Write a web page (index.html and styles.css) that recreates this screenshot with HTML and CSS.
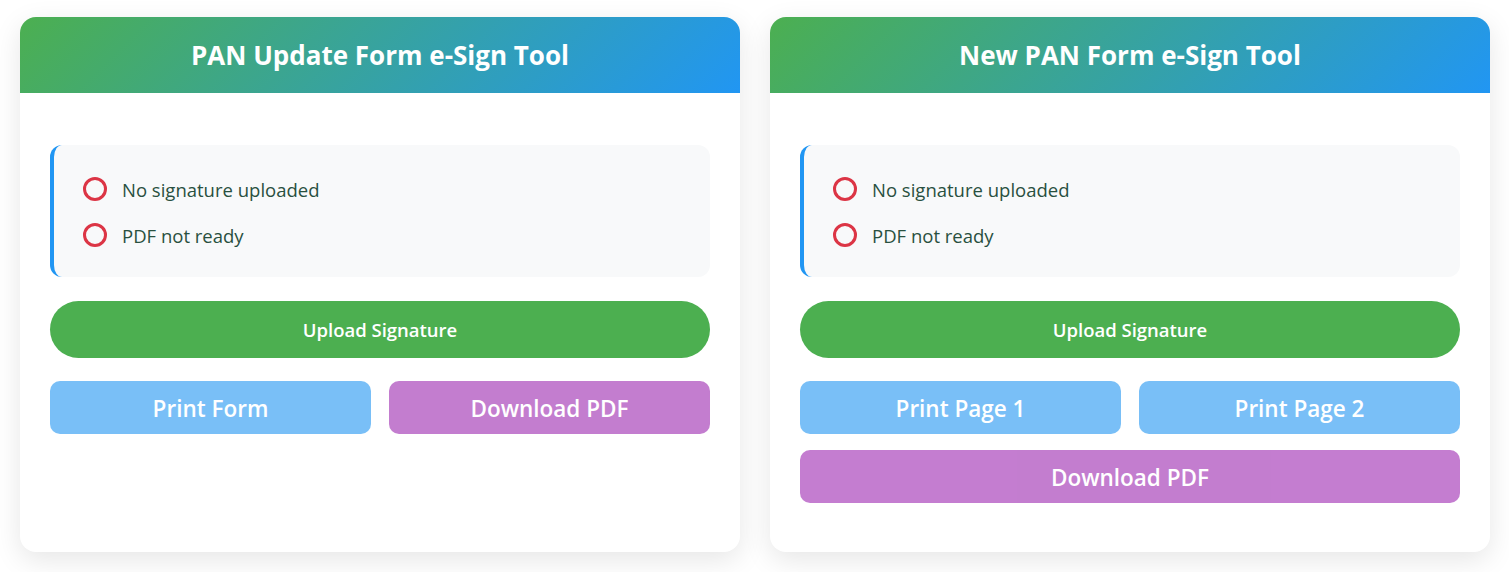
FILE: index.html
```html
<!DOCTYPE html>
<html lang="en">
<head>
<meta charset="utf-8">
<title>PAN e-Sign Tools</title>
<link rel="stylesheet" href="styles.css">
</head>
<body>
<main class="grid">
  <section class="card">
    <header class="card-head"><h1>PAN Update Form e-Sign Tool</h1></header>
    <div class="card-body">
      <div class="status">
        <div class="status-item"><span class="ring"></span><span>No signature uploaded</span></div>
        <div class="status-item"><span class="ring"></span><span>PDF not ready</span></div>
      </div>
      <button class="btn btn-upload">Upload Signature</button>
      <div class="btn-row">
        <button class="btn btn-print" disabled>Print Form</button>
        <button class="btn btn-pdf" disabled>Download PDF</button>
      </div>
    </div>
  </section>
  <section class="card">
    <header class="card-head"><h1>New PAN Form e-Sign Tool</h1></header>
    <div class="card-body">
      <div class="status">
        <div class="status-item"><span class="ring"></span><span>No signature uploaded</span></div>
        <div class="status-item"><span class="ring"></span><span>PDF not ready</span></div>
      </div>
      <button class="btn btn-upload">Upload Signature</button>
      <div class="btn-row">
        <button class="btn btn-print" disabled>Print Page 1</button>
        <button class="btn btn-print" disabled>Print Page 2</button>
        <button class="btn btn-pdf btn-wide" disabled>Download PDF</button>
      </div>
    </div>
  </section>
</main>
</body>
</html>
```

FILE: styles.css
```css
* { box-sizing: border-box; }
html, body { margin: 0; background: #ffffff; }
body {
  font-family: "Open Sans", "Noto Sans", sans-serif;
  padding: 17px 19px 20px 20px;
}
.grid {
  display: grid;
  grid-template-columns: 720px 720px;
  column-gap: 30px;
  align-items: stretch;
}
.card {
  background: #fff;
  border-radius: 16px;
  box-shadow: 0 8px 28px rgba(0, 0, 0, 0.10);
  overflow: hidden;
  display: flex;
  flex-direction: column;
}
.card-head {
  height: 76px;
  background: linear-gradient(135deg, #4caf50 0%, #2196f3 100%);
  display: flex;
  align-items: center;
  justify-content: center;
}
.card-head h1 {
  margin: 0;
  color: #fff;
  font-size: 26px;
  font-weight: 700;
  line-height: 1;
}
.card-body {
  padding: 52px 30px 49px;
  display: flex;
  flex-direction: column;
}
.status {
  background: #f8f9fa;
  border-left: 4px solid #2196f3;
  border-radius: 12px;
  padding: 32px 25px 30px 29px;
  display: flex;
  flex-direction: column;
  gap: 22px;
}
.status-item {
  display: flex;
  align-items: center;
  gap: 15px;
  height: 24px;
  font-size: 18.5px;
  color: #29503f;
}
.ring {
  width: 24px;
  height: 24px;
  border: 3.8px solid #dc3545;
  border-radius: 50%;
  flex: none;
}
.btn {
  border: none;
  color: #fff;
  font-family: inherit;
  font-weight: 600;
  cursor: pointer;
}
.btn:disabled { opacity: 0.6; cursor: not-allowed; }
.btn-upload {
  margin-top: 24px;
  height: 57px;
  border-radius: 30px;
  background: #4caf50;
  font-size: 18.5px;
}
.btn-row {
  margin-top: 23px;
  display: grid;
  grid-template-columns: 1fr 1fr;
  column-gap: 18px;
  row-gap: 16px;
}
.btn-row .btn {
  height: 53px;
  border-radius: 10px;
  font-size: 22.5px;
  padding-top: 3px;
}
.btn-print { background: #2196f3; }
.btn-pdf { background: #9c27b0; }
.btn-wide { grid-column: 1 / -1; }
```
